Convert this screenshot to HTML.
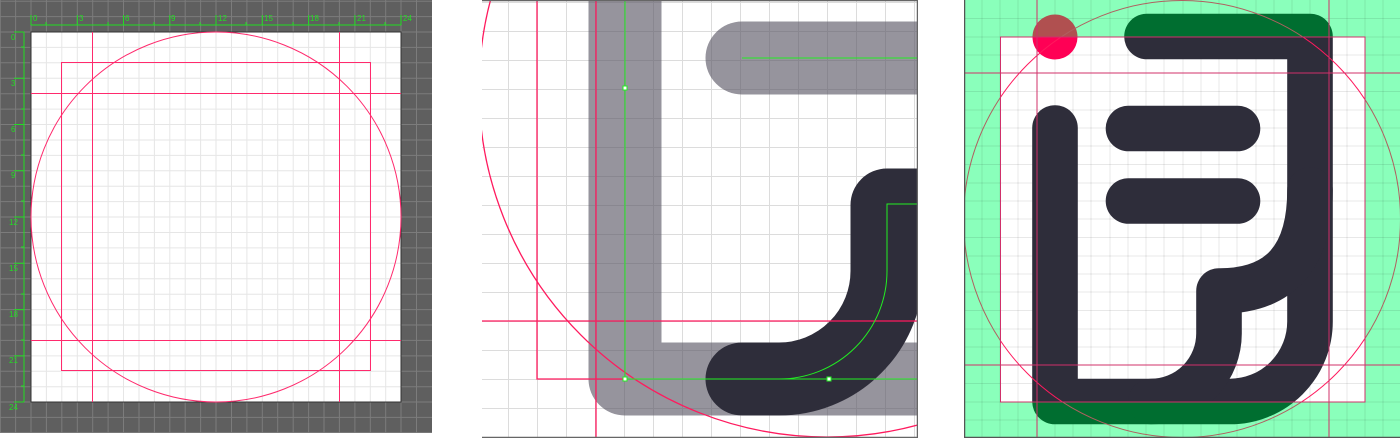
<!DOCTYPE html>
<html><head><style>
html,body{margin:0;padding:0;background:#fff;width:1400px;height:439px;overflow:hidden}
svg{position:absolute;left:0;top:0}
text{font-family:"Liberation Sans",sans-serif;font-size:8px;fill:#22dd22}
</style></head><body>
<svg width="1400" height="439" viewBox="0 0 1400 439" xmlns="http://www.w3.org/2000/svg">
<defs>
<clipPath id="p1"><rect x="0" y="0" width="432" height="433"/></clipPath>
<clipPath id="p2"><rect x="482" y="0" width="436" height="438"/></clipPath>
<clipPath id="p3"><rect x="964" y="0" width="436" height="438"/></clipPath>
<clipPath id="in3"><rect x="1000" y="37" width="365" height="365"/></clipPath>
<clipPath id="out3"><path clip-rule="evenodd" d="M964 0H1400V438H964Z M1000 37V402H1365V37Z"/></clipPath>
<g id="icon" fill="none" stroke-linecap="round" stroke-linejoin="round" stroke-width="45.6">
<path d="M1055 128V401.5H1230A80 80 0 0 0 1310 321.5V36.5H1147"/>
<path d="M1310 190Q1310 291 1220 291H1219V333A68 68 0 0 1 1151 401.5"/>
<path d="M1128.5 128.5H1237.5M1128.5 201H1237.5"/>
</g>
</defs>

<!-- PANEL 1 -->
<g clip-path="url(#p1)">
<rect x="0" y="0" width="432" height="433" fill="#5f5f5f"/>
<g stroke="#7c7c7c" stroke-width="1">
<path d="M0.5 1.2H432M0.5 16.6H432M0 417.4H432M0 432.6H432"/>
<path d="M0 32H432M0 47.4H432M0 62.8H432M0 78.3H432M0 93.7H432M0 109.1H432M0 124.5H432M0 140H432M0 155.4H432M0 170.8H432M0 186.2H432M0 201.6H432M0 217H432M0 232.5H432M0 247.9H432M0 263.3H432M0 278.7H432M0 294.2H432M0 309.6H432M0 325H432M0 340.4H432M0 355.9H432M0 371.3H432M0 386.7H432M0 402H432"/>
<path d="M0.3 0V433M15.6 0V433M31 0V433M46.4 0V433M61.8 0V433M77.3 0V433M92.7 0V433M108.1 0V433M123.5 0V433M139 0V433M154.4 0V433M169.8 0V433M185.2 0V433M200.6 0V433M216 0V433M231.5 0V433M246.9 0V433M262.3 0V433M277.7 0V433M293.2 0V433M308.6 0V433M324 0V433M339.4 0V433M354.9 0V433M370.3 0V433M385.7 0V433M401 0V433M416.5 0V433"/>
</g>
<rect x="31" y="32" width="370" height="370" fill="#fff"/>
<g stroke="#e6e6e6" stroke-width="1">
<path d="M31 47.4H401M31 62.8H401M31 78.3H401M31 109.1H401M31 124.5H401M31 140H401M31 155.4H401M31 170.8H401M31 186.2H401M31 201.6H401M31 217H401M31 232.5H401M31 247.9H401M31 263.3H401M31 278.7H401M31 294.2H401M31 309.6H401M31 325H401M31 355.9H401M31 371.3H401M31 386.7H401"/>
<path d="M46.4 32V402M61.8 32V402M77.3 32V402M108.1 32V402M123.5 32V402M139 32V402M154.4 32V402M169.8 32V402M185.2 32V402M200.6 32V402M216 32V402M231.5 32V402M246.9 32V402M262.3 32V402M277.7 32V402M293.2 32V402M308.6 32V402M324 32V402M354.9 32V402M370.3 32V402M385.7 32V402"/>
</g>
<rect x="31" y="32" width="370" height="370" fill="none" stroke="#333" stroke-width="1"/>
<g stroke="#ff2a6d" fill="none" stroke-width="1">
<path d="M92.5 32V402M339.5 32V402M31 93.5H401M31 340.5H401"/>
<rect x="61.5" y="62.5" width="309" height="308"/>
<circle cx="216" cy="217" r="185"/>
</g>
<g stroke="#22dd22" stroke-width="1" fill="none">
<path d="M31 25H401M31 15V25M77.3 15V25M123.5 15V25M169.8 15V25M216 15V25M262.3 15V25M308.6 15V25M354.9 15V25M401 15V25M46 22V25M108 22V25M154 22V25M200 22V25M246 22V25M293 22V25M339 22V25M385 22V25"/>
<path d="M24 32V402M14 32H24M14 78.3H24M14 124.5H24M14 170.8H24M14 217H24M14 263.3H24M14 309.6H24M14 355.9H24M14 402H24M21 47H24M21 109H24M21 155H24M21 201H24M21 247H24M21 294H24M21 340H24M21 386H24"/>
</g>
<text x="33" y="21">0</text><text x="79" y="21">3</text><text x="125" y="21">6</text><text x="171" y="21">9</text><text x="218" y="21">12</text><text x="264" y="21">15</text><text x="310" y="21">18</text><text x="357" y="21">21</text><text x="403" y="21">24</text>
<text x="11" y="40">0</text><text x="11" y="86">3</text><text x="11" y="132">6</text><text x="11" y="178">9</text><text x="9" y="225">12</text><text x="9" y="271">15</text><text x="9" y="317">18</text><text x="9" y="363">21</text><text x="9" y="410">24</text>
</g>

<!-- PANEL 2 -->
<g clip-path="url(#p2)">
<rect x="482" y="0" width="436" height="438" fill="#fff"/>
<g stroke="#dcdcdc" stroke-width="1">
<path d="M508.5 0V438M537.5 0V438M566.5 0V438M595.5 0V438M624.5 0V438M653.5 0V438M682.5 0V438M711.5 0V438M740.5 0V438M769.5 0V438M798.5 0V438M827.5 0V438M856.5 0V438M885.5 0V438M914.5 0V438"/>
<path d="M482 408.5H918M482 379.5H918M482 350.5H918M482 321.5H918M482 292.5H918M482 263.5H918M482 234.5H918M482 205.5H918M482 176.5H918M482 147.5H918M482 118.5H918M482 89.5H918M482 60.5H918M482 31.5H918M482 2.5H918"/>
</g>
<g fill="none" stroke="#5a5866" stroke-opacity="0.64" stroke-width="73" stroke-linejoin="round" stroke-linecap="round">
<path d="M625 -60V379H960"/>
<path d="M742 58H960"/>
</g>
<path d="M742 379H779A108 108 0 0 0 887 271V205H960" fill="none" stroke="#2e2d3a" stroke-width="73" stroke-linejoin="round" stroke-linecap="round"/>
<g stroke="#ff1a5e" fill="none" stroke-width="1.3">
<path d="M537 0V379H625M596 0V438M482 321H918"/>
<circle cx="827" cy="89" r="348"/>
</g>
<g stroke="#22ee22" fill="none" stroke-width="1">
<path d="M625 0V379H918M742 58H918"/>
<path d="M779 379A108 108 0 0 0 887 271V204H918"/>
</g>
<g fill="#fff" stroke="#22ee22" stroke-width="1">
<rect x="623" y="86" width="4" height="4"/><rect x="623" y="377" width="4" height="4"/><rect x="827" y="377" width="4" height="4"/>
</g>
<path d="M482 0.5H917.5V437.5H482" fill="none" stroke="#666" stroke-width="1.5"/>
</g>

<!-- PANEL 3 -->
<g clip-path="url(#p3)">
<rect x="964" y="0" width="436" height="438" fill="#8affbb"/>
<rect x="1000" y="37" width="365" height="365" fill="#fff"/>
<g stroke="#000" stroke-opacity="0.09" stroke-width="1">
<path d="M982 0V438M1000 0V438M1018 0V438M1037 0V438M1055 0V438M1073 0V438M1091 0V438M1110 0V438M1128 0V438M1146 0V438M1164 0V438M1183 0V438M1201 0V438M1219 0V438M1237 0V438M1256 0V438M1274 0V438M1292 0V438M1310 0V438M1329 0V438M1347 0V438M1365 0V438M1383 0V438"/>
<path d="M964 18.5H1400M964 37H1400M964 55H1400M964 73H1400M964 91.5H1400M964 110H1400M964 128H1400M964 146H1400M964 164.5H1400M964 183H1400M964 201H1400M964 219H1400M964 237.5H1400M964 256H1400M964 274H1400M964 292H1400M964 310.5H1400M964 329H1400M964 347H1400M964 365H1400M964 383.5H1400M964 402H1400M964 420H1400"/>
</g>
<g clip-path="url(#in3)">
<use href="#icon" stroke="#2e2d3a"/>
<circle cx="1055" cy="37" r="22.5" fill="#ff0055"/>
<circle cx="1182" cy="219" r="218.5" fill="none" stroke="#ff1a5e" stroke-width="1"/>
</g>
<g clip-path="url(#out3)">
<use href="#icon" stroke="#006e30"/>
<circle cx="1055" cy="37" r="22.5" fill="#b05050"/>
<circle cx="1182" cy="219" r="218.5" fill="none" stroke="#b06060" stroke-width="1"/>
</g>
<g stroke="#d0306a" fill="none" stroke-width="1">
<rect x="1000.5" y="37" width="364.5" height="365"/>
<path d="M1037 0V438M1329 0V438M964 73H1400M964 365H1400"/>
</g>
<path d="M964.5 0V437.5H1400" fill="none" stroke="#555" stroke-width="1.5"/>
</g>
</svg>
</body></html>
